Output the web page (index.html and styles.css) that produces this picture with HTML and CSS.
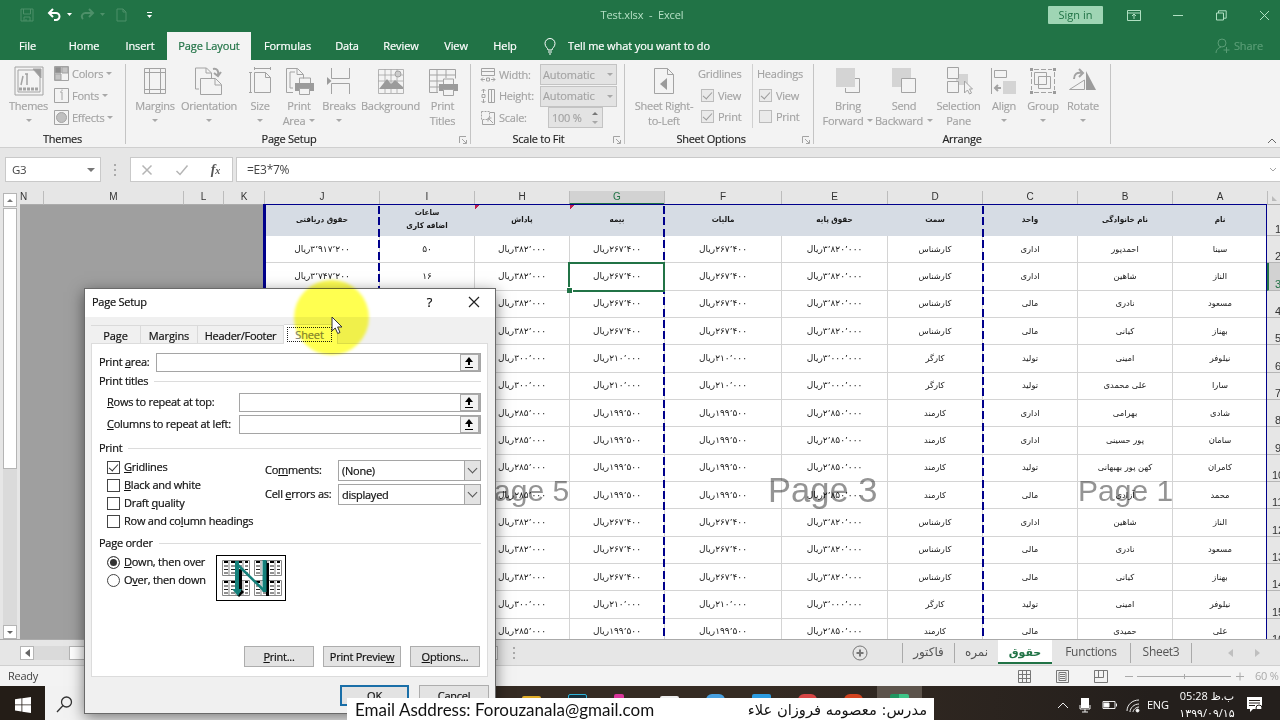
FILE: index.html
```html
<!DOCTYPE html>
<html lang="en">
<head>
	<title>Test.xlsx - Excel</title>
	<meta charset="UTF-8">
	<link rel="stylesheet" href="styles.css">
</head>
<body>
	<div class="titlebar">
		<div class="quick">
			<svg class="dim" width="14" height="14" viewBox="0 0 14 14"><path d="M1 1h12v12H1zM3.500 1v5h7V1M4 13V9h6v4M6 11v2"/></svg>
			<svg class="undo" width="26" height="14" viewBox="0 0 26 14"><path d="M6 1L2 5l4 4M2 5h7a3.500 3.500 0 0 1 0 7H7" stroke-width="2"/><path d="M20 5h5l-2.500 3z" fill="#fff" stroke="none"/></svg>
			<svg class="redo dim" width="26" height="14" viewBox="0 0 26 14"><path d="M9 1l4 4-4 4M13 5H6a3.500 3.500 0 0 0-3 6" stroke-width="2"/><path d="M20 5h5l-2.500 3z" fill="#4d9069" stroke="none"/></svg>
			<svg class="new dim" width="11" height="14" viewBox="0 0 11 14"><path d="M1 1h6l3 3v9H1zM7 1v3h3"/></svg>
			<svg class="more" width="7" height="8" viewBox="0 0 7 8"><path d="M1 1.500h5"/><path d="M1 4h5L3.500 7z" fill="#fff" stroke="none"/></svg>
		</div>
		<div class="doc-name">Test.xlsx &nbsp;-&nbsp; Excel</div>
		<div class="win">
			<span class="signin">Sign in</span>
			<svg width="14" height="11" viewBox="0 0 14 11"><path d="M.5.5h13v10H.5zM.5 3h13M7 9V4.500M5 6l2-2 2 2"/></svg>
			<svg width="10" height="11" viewBox="0 0 10 11"><path d="M0 5.500h10"/></svg>
			<svg width="11" height="11" viewBox="0 0 11 11"><path d="M.5 3h7v7h-7zM2.500 3V.8h7.700v7.400H8"/></svg>
			<svg width="11" height="11" viewBox="0 0 11 11"><path d="M1 1l9 9M10 1l-9 9"/></svg>
		</div>
	</div>

	<div class="tabs">
		<span class="tab file">File</span><span class="tab home">Home</span><span class="tab insert">Insert</span><span class="tab layout on">Page Layout</span><span class="tab formulas">Formulas</span><span class="tab data">Data</span><span class="tab review">Review</span><span class="tab view">View</span><span class="tab help">Help</span>
		<svg class="bulb" width="12" height="17" viewBox="0 0 12 17"><path d="M4 12c0-2-3-3-3-6.500a5 5 0 0 1 10 0C11 9 8 10 8 12zM4 14h4M5 16h2"/></svg>
		<span class="tell">Tell me what you want to do</span>
		<span class="share"><svg width="15" height="16" viewBox="0 0 15 16"><circle cx="7" cy="5" r="4"/><path d="M1 15c0-3 2-5 5-6M11.500 9v6M8.500 12h6"/></svg>Share</span>
	</div>

	<div class="ribbon">
		<div class="group g-themes">
			<div class="tools">
				<div class="tool"><svg width="30" height="30" viewBox="0 0 30 30"><path d="M1 1h28v28H1zM4 4h22v22H4z"/><path d="M19 3h8v9z" fill="#9b9b9b"/><path d="M9 10l-2 9M13 8v11M11 8h3" stroke-width="1.500"/><path d="M5 23h20" stroke-width="3" stroke-dasharray="3 1"/></svg><span>Themes</span><i class="car"></i></div>
				<div class="stack">
					<div><svg width="15" height="15" viewBox="0 0 15 15"><path d="M.5.5h14v14H.5z"/><path d="M1 1h6v6H1z" fill="#8d8d8d"/><path d="M8 1h6v6H8zM1 8h6v6H1z" fill="#c4c4c4"/></svg>Colors<i class="car"></i></div>
					<div><svg width="15" height="15" viewBox="0 0 15 15"><path d="M.5.5h14v14H.5zM8 4v8M6 4h2M8 1.500v1.500"/></svg>Fonts<i class="car"></i></div>
					<div><svg width="15" height="15" viewBox="0 0 15 15"><path d="M.5.5h14v14H.5z"/><circle cx="7.500" cy="7.500" r="5" fill="#c0c0c0"/></svg>Effects<i class="car"></i></div>
				</div>
			</div>
			<div class="caption">Themes</div>
		</div>

		<div class="group g-setup">
			<div class="tools">
				<div class="tool t48"><svg width="24" height="30" viewBox="0 0 24 30"><path d="M1.500 2.500h21v25h-21zM6.500 2.500v25M17.500 2.500v25M1.500 6.500h21M1.500 23.500h21"/></svg><span>Margins</span><i class="car"></i></div>
				<div class="tool t60"><svg width="30" height="30" viewBox="0 0 30 30"><path d="M5 23H1.500v-21h11l5 5v5M12 2v5h5M6.500 12.500h15l6 6v10h-21zM21 13v6h6" /><path d="M19 3c4-1 6 2 5 6M20 7l4 3 3-4" stroke-width="2"/></svg><span>Orientation</span><i class="car"></i></div>
				<div class="tool t42"><svg width="24" height="30" viewBox="0 0 24 30"><path d="M6.500 6.500h11l5 5v15h-16zM17.500 6.500v5h5M6 2.500h17M6.500 1v3M22.500 1v3M2.500 6v21M1 6.500h3M1 26.500h3"/></svg><span>Size</span><i class="car"></i></div>
				<div class="tool t36"><svg width="30" height="30" viewBox="0 0 30 30"><path d="M9 26.500H2.500v-24h11l6 6v4M13 2.500v6h6M9 22H6V6h5"/><path d="M15.500 18v-6h11v6"/><path d="M11 17h19v8H11z" fill="#9b9b9b" stroke="none"/><path d="M15.500 22.500h10v6h-10z" fill="#f3f3f3"/></svg><span>Print<br>Area<i class="car"></i></span></div>
				<div class="tool t44"><svg width="26" height="30" viewBox="0 0 26 30"><path d="M5.500 2v10.500h18V2M5.500 28V17.500h18V28"/><path d="M1 11l4.500 4L1 19z" fill="#9b9b9b" stroke="none"/></svg><span>Breaks</span><i class="car"></i></div>
				<div class="tool t59"><svg width="28" height="30" viewBox="0 0 28 30"><path d="M1.500 3.500h25v24h-25zM1 9h25M1 15h25M8 3v24M14 3v24M20 3v24" stroke-width=".8"/><path d="M2 23l8-10 4 5 4-4 8 7v2z" fill="#9b9b9b" stroke="none"/><circle cx="21" cy="8" r="3" fill="#ccc"/></svg><span>Background</span></div>
				<div class="tool t45"><svg width="30" height="30" viewBox="0 0 30 30"><path d="M10 26.500H1.500v-23h26v9M1 9h26M1 15h14M1 21h10M9 3v23M18 3v9"/><path d="M15.500 18v-5h10v5"/><path d="M11 18h19v7H11z" fill="#9b9b9b" stroke="none"/><path d="M15.500 23.500h10v6h-10z" fill="#f3f3f3"/></svg><span>Print<br>Titles</span></div>
			</div>
			<div class="caption">Page Setup</div>
			<svg class="launch" width="8" height="8" viewBox="0 0 8 8"><path d="M.5 7V.5H7M3 3l4 4M7.500 4v3.500H4"/></svg>
		</div>

		<div class="group g-scale">
			<div class="lines">
				<div><svg width="16" height="16" viewBox="0 0 16 16"><path d="M1.500 1.500h13v7h-13zM1 4.500h13M1 12.500h4M11 12.500h4M3 10.500l-2 2 2 2M13 10.500l2 2-2 2M6.500 11h3v3h-3z"/></svg><label>Width:</label><span class="combo">Automatic<i class="car"></i></span></div>
				<div><svg width="16" height="16" viewBox="0 0 16 16"><path d="M8.500 1.500h6v13h-6zM11.500 1v13M3.500 1v4M3.500 11v4M1.500 3l2-2 2 2M1.500 13l2 2 2-2M2 6.500h3v3H2z"/></svg><label>Height:</label><span class="combo">Automatic<i class="car"></i></span></div>
				<div><svg width="16" height="16" viewBox="0 0 16 16"><path d="M1.500 1.500h8v8h-8z" stroke-dasharray="2 1"/><path d="M10 2.500h4.500v12h-12V10M8 8l5 5M8 11.500V8h3.500"/></svg><label>Scale:</label><span class="spin">100 %<b><i class="car up"></i><i class="car"></i></b></span></div>
			</div>
			<div class="caption">Scale to Fit</div>
			<svg class="launch" width="8" height="8" viewBox="0 0 8 8"><path d="M.5 7V.5H7M3 3l4 4M7.500 4v3.500H4"/></svg>
		</div>

		<div class="group g-options">
			<div class="tools">
				<div class="tool t60"><svg width="22" height="30" viewBox="0 0 22 30"><path d="M1.500 2.500h13l6 6v19h-19zM14.500 2.500v6h6"/><path d="M14 12v12l-7-6z" fill="#9b9b9b" stroke="none"/></svg><span>Sheet Right-<br>to-Left</span></div>
				<div class="opts"><span>Gridlines</span><span><i class="chk ticked"></i>View</span><span><i class="chk ticked"></i>Print</span></div>
				<div class="opts second"><span>Headings</span><span><i class="chk ticked"></i>View</span><span><i class="chk"></i>Print</span></div>
			</div>
			<div class="caption">Sheet Options</div>
			<svg class="launch" width="8" height="8" viewBox="0 0 8 8"><path d="M.5 7V.5H7M3 3l4 4M7.500 4v3.500H4"/></svg>
		</div>

		<div class="group g-arrange">
			<div class="tools">
				<div class="tool t50"><svg width="26" height="30" viewBox="0 0 26 30"><path d="M20 12.500h4.500v14h-14V22"/><path d="M1 2h19v19H1z" fill="#d4d4d4" stroke="none"/></svg><span>Bring<br>Forward<i class="car"></i></span></div>
				<div class="tool t62"><svg width="26" height="30" viewBox="0 0 26 30"><path d="M1 2h19v19H1z" fill="#d4d4d4" stroke="none"/><path d="M10.500 12.500h14v14h-14z" fill="#f3f3f3"/></svg><span>Send<br>Backward<i class="car"></i></span></div>
				<div class="tool t47"><svg width="28" height="30" viewBox="0 0 28 30"><path d="M11 8h12v11H11z" fill="#d4d4d4" stroke="none"/><path d="M2.500 1.500h11v11h-11zM2.500 15.500h11v11h-11z" fill="#f3f3f3"/><path d="M19.500 15v12l3-3 2 4 2-1-2-4h3z" fill="#f3f3f3"/></svg><span>Selection<br>Pane</span></div>
				<div class="tool t44"><svg width="28" height="30" viewBox="0 0 28 30"><path d="M1.500 2v26M4.500 4.500h12v7h-12z"/><path d="M13 15h13v13H13z" fill="#d4d4d4" stroke="none"/><path d="M5 22h6M8 19l-3 3 3 3" stroke-width="2"/></svg><span>Align</span><i class="car"></i></div>
				<div class="tool t34"><svg width="28" height="30" viewBox="0 0 28 30"><path d="M5 3.500h18M5 26.500h18M2.500 6v18M25.500 6v18" stroke-dasharray="5 2"/><path d="M5.500 6.500h12v12h-12zM9.500 10.500h12v12h-12z"/><path d="M1 2h3v3H1zM24 2h3v3h-3zM1 25h3v3H1zM24 25h3v3h-3z" fill="#9b9b9b" stroke="none"/></svg><span>Group</span><i class="car"></i></div>
				<div class="tool t46"><svg width="30" height="30" viewBox="0 0 30 30"><path d="M18 5v19h10z" fill="#9b9b9b" stroke="none"/><path d="M1.500 23.500L16.500 14v9.500z"/><path d="M6 13c0-5 3-7 8-6M11 3l4 4-4 4" stroke-width="2"/></svg><span>Rotate</span><i class="car"></i></div>
			</div>
			<div class="caption">Arrange</div>
		</div>
		<svg class="collapse" width="10" height="6" viewBox="0 0 10 6"><path d="M1 5l4-4 4 4"/></svg>
	</div>

	<div class="formula-bar">
		<div class="name-box">G3<i class="car"></i></div>
		<i class="dots"></i>
		<div class="fx">
			<svg width="12" height="12" viewBox="0 0 12 12"><path d="M1.500 1.500l9 9M10.500 1.500l-9 9"/></svg>
			<svg width="14" height="12" viewBox="0 0 14 12"><path d="M1.500 7l3.500 3.500L12.500 1.500"/></svg>
			<em>f<small>x</small></em>
		</div>
		<div class="formula">=E3*7%<svg width="8" height="6" viewBox="0 0 8 6"><path d="M1 1l3 3 3-3"/></svg></div>
	</div>

	<div class="work">
		<div class="vscroll">
			<span class="arrow"><i class="car up"></i></span>
			<span class="thumb"></span>
			<span class="arrow end"><i class="car"></i></span>
		</div>
		<div class="sheet" dir="rtl">
			<div class="heads" id="heads"></div>
			<div class="rows" id="rows"></div>
			<i class="brk b1"></i><i class="brk b2"></i><i class="brk b3"></i>
			<i class="edge"></i>
			<div class="mark m1" dir="ltr">Page 1</div>
			<div class="mark m3" dir="ltr">Page 3</div>
			<div class="mark m5" dir="ltr">Page 5</div>
		</div>
	</div>

	<div class="sheet-tabs">
		<div class="hscroll"><span class="arrow"><i class="car left"></i></span><span class="hthumb"></span></div>
		<i class="dots"></i>
		<svg class="plus" width="16" height="16" viewBox="0 0 16 16"><circle cx="8" cy="8" r="7"/><path d="M8 4.500v7M4.500 8h7" stroke-width="2"/></svg>
		<span class="stab s1">فاکتور</span><span class="stab s2">نمره</span><span class="stab s3">حقوق</span><span class="stab s4">Functions</span><span class="stab s5">Sheet3</span>
		<i class="car left nav"></i><i class="car right nav"></i>
	</div>

	<div class="status">
		<span class="ready">Ready</span>
		<svg width="13" height="13" viewBox="0 0 13 13"><path d="M.5.5h12v12H.5zM.5 4.500h12M.5 8.500h12M4.500.5v12M8.500.5v12"/></svg>
		<svg width="13" height="13" viewBox="0 0 13 13"><path d="M.5.5h12v12H.5zM3 2.500h7v8H3zM4 4.500h5M4 6.500h5M4 8.500h5"/></svg>
		<svg width="14" height="13" viewBox="0 0 14 13"><path d="M.5.500h13v12H.5zM4.500.5v7M9.500.5v7M0 7.500h9.500"/></svg>
		<svg class="zoomer" width="120" height="13" viewBox="0 0 120 13"><path d="M1 6.500h8M13 6.500h94M60.500 4v5M112 6.500h8M116 2.500v8"/></svg>
		<span class="pct">60 %</span>
	</div>

	<div class="taskbar">
		<span class="start"><svg width="16" height="16" viewBox="0 0 16 16"><path d="M0 2.200l6.500-.9v6.200H0zM7.300 1.200L16 0v7.500H7.300zM0 8.300h6.500v6.200L0 13.600zM7.300 8.300H16V16l-8.700-1.200z"/></svg></span>
		<span class="search"><svg width="17" height="17" viewBox="0 0 17 17"><circle cx="10.500" cy="6" r="5"/><path d="M7 9.500L1 16"/></svg></span>
		<span class="apps">
			<i class="app yellow"></i><i class="app cyan"></i><i class="app pink"></i><i class="app white"></i><i class="app blue"></i><i class="app sky"></i><i class="app red"></i><i class="app orange"></i><i class="app excel"></i>
		</span>
		<svg class="tray" width="84" height="18" viewBox="0 0 84 18">
			<path d="M1 12l5-5 5 5"/>
			<path d="M24 2h8v10h-8z" fill="#fff" stroke="none"/><path d="M23 9v4h10V9M28 13v3M25 16h6"/>
			<path d="M46 5.500h12v7H46zM59.500 7.500v3"/><path d="M47 7h5v4h-5z" fill="#fff"/>
			<path d="M70 15C70 9 75 4 82 4M73 16c0-4 4-8 9-8M76 16c0-2 3-5 6-5" /><circle cx="80.500" cy="14.500" r="1.500" fill="#fff"/>
		</svg>
		<span class="lang">ENG</span>
		<span class="clock"><span dir="rtl">ب.ظ 05:28</span><span dir="ltr"><bdo dir="ltr">۱۳۹۹/۰۹/۱۵</bdo></span></span>
		<svg class="note" width="17" height="17" viewBox="0 0 17 17"><path d="M1 1h15v12H7l-3 3v-3H1z" fill="#fff" stroke="none"/><path d="M3 4.500h11M3 7h11M3 9.500h6" stroke="#241f1c"/><circle cx="13" cy="12" r="3" stroke="#241f1c"/></svg>
	</div>

	<div class="dialog">
		<div class="dlg-title">Page Setup<span class="q">?</span><svg width="12" height="12" viewBox="0 0 12 12"><path d="M1 1l10 10M11 1L1 11"/></svg></div>
		<div class="dlg-tabs"><span class="d1">Page</span><span class="d2">Margins</span><span class="d3">Header/Footer</span><span class="d4"><b>Sheet</b></span></div>
		<div class="panel">
			<div class="field area"><label>Print <u>a</u>rea:</label><span class="ref"><i></i></span></div>
			<div class="legend">Print titles</div>
			<div class="field rowsf"><label><u>R</u>ows to repeat at top:</label><span class="ref"><i></i></span></div>
			<div class="field colsf"><label><u>C</u>olumns to repeat at left:</label><span class="ref"><i></i></span></div>
			<div class="legend print">Print</div>
			<div class="print-opts">
				<div class="checks">
					<span><i class="box ticked"></i><u>G</u>ridlines</span>
					<span><i class="box"></i><u>B</u>lack and white</span>
					<span><i class="box"></i>Draft <u>q</u>uality</span>
					<span><i class="box"></i>Row and co<u>l</u>umn headings</span>
				</div>
				<div class="selects">
					<div><label>Co<u>m</u>ments:</label><span class="sel">(None)<i></i></span></div>
					<div><label>Cell <u>e</u>rrors as:</label><span class="sel">displayed<i></i></span></div>
				</div>
			</div>
			<div class="legend order">Page order</div>
			<div class="order-row">
				<div class="checks">
					<span><i class="radio picked"></i><u>D</u>own, then over</span>
					<span><i class="radio"></i>O<u>v</u>er, then down</span>
				</div>
				<svg class="preview" width="70" height="46" viewBox="0 0 70 46">
					<rect x=".5" y=".5" width="69" height="45" fill="#fff" stroke="#000"/>
					<defs><g id="pg"><path d="M.5.5h27v15H.5zM7 .5v15M14 .5v15M21 .5v15" fill="#fff" stroke="#888"/><path d="M2 2h24" stroke="#000" stroke-width="2" stroke-dasharray="4 3"/><path d="M2 6h24M2 9.500h24M2 13h24" stroke="#222" stroke-dasharray="4 3"/></g></defs>
					<use href="#pg" x="6" y="5"/><use href="#pg" x="38" y="5"/><use href="#pg" x="6" y="25"/><use href="#pg" x="38" y="25"/>
					<path d="M24.500 15v21M51.500 8v33M22 41l5-5" stroke="#000" stroke-width="3"/>
					<path d="M48.500 5v32" stroke="#14807a" stroke-width="4"/>
					<path d="M48.500 36L21 9" stroke="#14807a" stroke-width="2.500"/>
					<path d="M21 6v29" stroke="#14807a" stroke-width="4"/>
					<path d="M16 34h10l-4 7z" fill="#14807a" stroke="none"/>
				</svg>
			</div>
			<div class="btns"><span class="btn p1"><u>P</u>rint...</span><span class="btn p2">Print Previe<u>w</u></span><span class="btn p3"><u>O</u>ptions...</span></div>
		</div>
		<div class="foot"><span class="btn ok">OK</span><span class="btn cancel">Cancel</span></div>
	</div>

	<div class="halo"></div>
	<svg class="pointer" width="12" height="19" viewBox="0 0 12 19"><path d="M1 1v14l3.200-3 2.500 5.500 2.300-1L6.600 11H11z"/></svg>
	<div class="banner"><span class="mail">Email Asddress: Forouzanala@gmail.com</span><span class="teacher" dir="rtl">مدرس: معصومه فروزان علاء</span></div>

	<script src="script.js"></script>
</body>
</html>
```

FILE: styles.css
```css
* {
	box-sizing: border-box;
	margin: 0;
	padding: 0;
}
body {
	width: 1280px;
	height: 720px;
	overflow: hidden;
	position: relative;
	display: flex;
	flex-direction: column;
	background: #e6e6e6;
	font: 11px/14px "Open Sans", "DejaVu Sans", sans-serif;
	letter-spacing: -.25px;
	color: #222;
}
svg {
	display: block;
	flex: none;
	fill: none;
	stroke: #a3a3a3;
}
i { font-style: normal; }

/* small triangles */
.car {
	display: inline-block;
	flex: none;
	border: 3px solid transparent;
	border-top-color: #a8a8a8;
	border-bottom: 0;
}
.car.up {
	border-top: 0;
	border-bottom: 3px solid #777;
}
.car.left {
	border: 4px solid transparent;
	border-right: 5px solid #666;
	border-left: 0;
}
.car.right {
	border: 4px solid transparent;
	border-left: 5px solid #666;
	border-right: 0;
}

/* title bar */
.titlebar {
	height: 30px;
	flex: none;
	display: flex;
	align-items: center;
	justify-content: space-between;
	background: #217346;
}
.titlebar svg { stroke: #b0e0c2; }
.quick {
	display: flex;
	align-items: center;
	width: 500px;
	padding-left: 20px;
}
.titlebar .quick .dim { stroke: #4d9069; }
.titlebar .quick .undo { margin-left: 13px; stroke: #fff; }
.quick .redo { margin-left: 7px; }
.quick .new { margin-left: 10px; }
.titlebar .quick .more { margin-left: 19px; stroke: #fff; }
.doc-name {
	margin-left: 4px;
	color: #b5e0c5;
	letter-spacing: -.1px;
	white-space: nowrap;
}
.win {
	width: 500px;
	display: flex;
	align-items: center;
	justify-content: flex-end;
	padding-right: 10px;
}
.win svg:nth-of-type(1) { margin: 0 32px 0 24px; }
.win svg:nth-of-type(2) { margin-right: 33px; }
.win svg:nth-of-type(3) { margin-right: 32px; }
.signin {
	width: 55px;
	height: 18px;
	line-height: 18px;
	text-align: center;
	background: #9fd5b4;
	color: #217346;
	border-radius: 1px;
	letter-spacing: 0;
}

/* ribbon tabs */
.tabs {
	height: 30px;
	flex: none;
	display: flex;
	padding-top: 2px;
	align-items: center;
	background: #217346;
	color: #fff;
	letter-spacing: -.1px;
	-webkit-text-stroke: .2px;
}
.tab {
	height: 28px;
	line-height: 28px;
	text-align: center;
	white-space: nowrap;
}
.tab.on {
	background: #f3f3f3;
	color: #217346;
}
.file { width: 55px; }
.home { width: 58px; }
.insert { width: 54px; }
.layout { width: 84px; }
.formulas { width: 73px; }
.data { width: 46px; }
.review { width: 62px; }
.view { width: 48px; }
.help { width: 50px; }
.bulb { margin-left: 14px; stroke: #fff; }
.tell { margin-left: 12px; }
.share {
	display: flex;
	align-items: center;
	gap: 4px;
	margin-left: auto;
	padding-right: 17px;
	color: #5a9d76;
}
.share svg { stroke: #5a9d76; }

/* ribbon */
.ribbon {
	height: 88px;
	flex: none;
	display: flex;
	position: relative;
	padding-top: 4px;
	background: #f3f3f3;
	border-bottom: 1px solid #cfcfcf;
	color: #a3a3a3;
	-webkit-text-stroke: .15px;
}
.group {
	height: 80px;
	display: flex;
	flex-direction: column;
	justify-content: space-between;
	position: relative;
	border-right: 1px solid #c4c4c4;
}
.g-themes { width: 126px; }
.g-setup { width: 345px; }
.g-scale { width: 154px; }
.g-options { width: 189px; }
.g-arrange { width: 297px; }
.caption {
	height: 11px;
	line-height: 12px;
	text-align: center;
	color: #222;
}
.g-setup .caption { padding-right: 18px; }
.g-scale .caption { padding-right: 18px; }
.g-options .caption { padding-right: 16px; }
.launch {
	position: absolute;
	right: 3px;
	bottom: 0;
}
.tools {
	display: flex;
	padding-left: 5px;
}
.g-themes .tools { padding-left: 7px; }
.g-arrange .tools { padding-left: 9px; }
.g-options .tools { padding-left: 9px; }
.tool {
	width: 43px;
	display: flex;
	flex-direction: column;
	align-items: center;
	padding-top: 2px;
	text-align: center;
	white-space: nowrap;
	line-height: 15px;
}
.tool > span { margin-top: 2px; }
.tool > .car { margin-top: 6px; }
.tool span .car { margin: 0 0 3px 4px; }
.t34 { width: 34px; }
.t36 { width: 36px; }
.t42 { width: 42px; }
.t44 { width: 44px; }
.t45 { width: 45px; }
.t46 { width: 46px; }
.t47 { width: 47px; }
.t48 { width: 48px; }
.t50 { width: 50px; }
.t59 { width: 59px; }
.t60 { width: 60px; }
.t62 { width: 62px; }
.stack {
	padding: 2px 0 0 4px;
	display: flex;
	flex-direction: column;
	gap: 7px;
}
.stack div {
	height: 15px;
	display: flex;
	align-items: center;
	gap: 3px;
}
.lines div {
	height: 21.500px;
	display: flex;
	align-items: center;
	padding-left: 9px;
}
.lines label { width: 42px; padding-left: 2px; }
.lines svg { margin-right: 1px; }
.combo {
	width: 77px;
	height: 21px;
	display: flex;
	align-items: center;
	justify-content: space-between;
	padding: 0 3px 0 2px;
	margin-left: 1px;
	background: #e3e3e3;
	border: 1px solid #c3c3c3;
	letter-spacing: -.1px;
}
.spin {
	width: 55px;
	height: 21px;
	display: flex;
	align-items: center;
	justify-content: space-between;
	padding: 0 4px 0 3px;
	margin-left: 9px;
	background: #e3e3e3;
	border: 1px solid #c3c3c3;
}
.spin b {
	display: flex;
	flex-direction: column;
	gap: 6px;
}
.opts {
	display: flex;
	flex-direction: column;
	gap: 7.500px;
	width: 51px;
	margin-left: 7px;
	padding-top: 3px;
}
.opts span {
	display: flex;
	gap: 4px;
	align-items: center;
	white-space: nowrap;
}
.opts.second {
	width: 54px;
	margin-left: 0;
	border-left: 1px solid #d0d0d0;
	padding-left: 4px;
}
.opts span:first-child { margin-left: -3px; }
.opts.second span:first-child { margin-left: 0; }
.chk {
	width: 13px;
	height: 13px;
	margin-top: -1px;
	border: 1px solid #bcbcbc;
	background: #eaeaea;
}
.opts.second .chk { margin-left: 2px; }
.ticked::after {
	content: "";
	display: block;
	width: 8px;
	height: 4px;
	margin: 2px 0 0 1px;
	border: solid #9a9a9a;
	border-width: 0 0 1.300px 1.300px;
	transform: rotate(-48deg);
}
.collapse {
	position: absolute;
	right: 3px;
	bottom: 3px;
	stroke: #666;
}

/* formula bar */
.formula-bar {
	flex: none;
	display: flex;
	align-items: center;
	height: 43px;
	padding: 9px 0 9px 5px;
	color: #444;
}
.name-box {
	width: 96px;
	height: 25px;
	display: flex;
	align-items: center;
	justify-content: space-between;
	padding: 0 5px 0 6px;
	background: #fff;
	border: 1px solid #c9c9c9;
	font-size: 11.500px;
}
.name-box .car {
	border-width: 4px 4px 0;
	border-top-color: #777;
}
.dots {
	width: 2px;
	height: 12px;
	background: repeating-linear-gradient(#aaa 0 2px, transparent 2px 5px);
}
.formula-bar .dots { margin: 0 14px 0 13px; }
.fx {
	width: 103px;
	height: 25px;
	display: flex;
	align-items: center;
	justify-content: space-between;
	padding: 0 12px 0 10px;
	background: #fff;
	border: 1px solid #c9c9c9;
}
.fx svg { stroke: #b5b5b5; stroke-width: 1.500; }
.fx em {
	font: italic bold 14px "Liberation Serif", serif;
	color: #555;
}
.fx small { font-size: 10px; }
.formula {
	flex: 1;
	height: 25px;
	display: flex;
	align-items: center;
	justify-content: space-between;
	margin-left: 3px;
	padding: 0 3px 0 10px;
	background: #fff;
	border: 1px solid #c9c9c9;
	border-right: 0;
	font-size: 12px;
}

/* worksheet */
.work {
	flex: none;
	display: flex;
	height: 449px;
	border-bottom: 1px solid #aaa;
}
.vscroll {
	width: 20px;
	display: flex;
	flex-direction: column;
	padding: 2px 3px 0;
}
.arrow {
	width: 14px;
	height: 14px;
	flex: none;
	display: flex;
	align-items: center;
	justify-content: center;
	background: #fff;
	border: 1px solid #b5b5b5;
}
.arrow .car { border-top-color: #666; }
.arrow .car.left { border-top-color: transparent; }
.thumb {
	height: 261px;
	margin-top: 1px;
	background: #fff;
	border: 1px solid #b5b5b5;
}
.vscroll::after {
	content: "";
	order: 1;
	flex: 1;
	background: #dadada;
}
.arrow.end { order: 2; }
.sheet {
	width: 1260px;
	position: relative;
	overflow: hidden;
	background: #9f9f9f;
	font-family: "Liberation Sans", "DejaVu Sans", sans-serif;
	letter-spacing: normal;
}
.heads {
	display: flex;
	height: 14px;
	background: #e6e6e6;
	font-size: 10px;
	line-height: 12px;
	color: #333;
}
.heads span {
	flex: none;
	text-align: center;
	border-left: 1px solid #bcbcbc;
	border-bottom: 1px solid #ababab;
}
.heads .w23 {
	text-align: left;
	border-left: 0;
}
.heads .corner::after {
	content: "";
	display: block;
	margin: 5px 3px 0 0;
	width: 0;
	border-left: 5px solid transparent;
	border-bottom: 5px solid #bbb;
	transform: scaleX(-1);
}
.heads .cur {
	background: #d2d2d2;
	color: #217346;
	border-bottom: 2px solid #217346;
}
.w13 { width: 13px; }
.w23 { width: 23px; }
.w40 { width: 40px; }
.w41 { width: 41px; }
.w95 { width: 95px; }
.w106 { width: 106px; }
.w115 { width: 115px; }
.w117 { width: 117px; }
.w140 { width: 140px; }
.row {
	display: flex;
	width: 1016px;
	height: 27.330px;
	background: #fff;
	font-family: "DejaVu Sans", sans-serif;
	font-size: 9px;
	color: #1a1a1a;
}
.row.first {
	height: 31px;
	background: #d6dce4;
	font-family: "DejaVu Sans Condensed", "DejaVu Sans", sans-serif;
	font-weight: bold;
}
.cell {
	flex: none;
	display: flex;
	align-items: center;
	justify-content: center;
	text-align: center;
	line-height: 13px;
	border-left: 1px solid #d4d4d4;
	border-bottom: 1px solid #d4d4d4;
	white-space: pre;
}
.cell.name { font-size: 8.400px; }
.first .cell, .first .cell.name {
	padding-bottom: 2px;
	border-color: #d6dce4;
	font-size: 8px;
}
.num {
	width: 13px;
	flex: none;
	display: flex;
	align-items: flex-end;
	justify-content: flex-end;
	direction: ltr;
	overflow: hidden;
	background: #e6e6e6;
	border-bottom: 1px solid #b5b5b5;
	font: 11px/11px "Liberation Sans", sans-serif;
	color: #333;
}
.num b {
	width: 5px;
	font-weight: normal;
}
.num.long b { width: 8px; }
.num.cur {
	background: #d2d2d2;
	color: #217346;
	border-left: 2px solid #217346;
}
.cell.selected {
	position: relative;
	outline: 2px solid #217346;
	outline-offset: -1px;
	z-index: 3;
}
.cell.selected::after {
	content: "";
	position: absolute;
	left: -3px;
	bottom: -3px;
	width: 5px;
	height: 5px;
	background: #217346;
	border: solid #fff;
	border-width: 1px 1px 0 0;
}
.cell.note { background: linear-gradient(135deg, #c02050 3px, transparent 3px); }
/* page breaks and print area edge lie over the cells */
.brk {
	position: absolute;
	top: 15px;
	bottom: 0;
	width: 2px;
	background: repeating-linear-gradient(#00008b 0 8px, transparent 8px 11.400px);
}
.b1 { left: 962px; }
.b2 { left: 643px; z-index: 2; }
.b3 { left: 358px; }
.edge {
	position: absolute;
	left: 243px;
	top: 13px;
	right: 13px;
	bottom: 0;
	border: solid #00008b;
	border-width: 1.500px 1px 0 3px;
}
.mark {
	position: absolute;
	color: #949494;
	mix-blend-mode: multiply;
	white-space: nowrap;
	line-height: 40px;
}
.m1 { left: 1058px; top: 280px; font-size: 30px; }
.m3 { left: 748px; top: 279px; font-size: 34.500px; }
.m5 { left: 454px; top: 280px; font-size: 30px; }

/* sheet tabs */
.sheet-tabs {
	flex: none;
	height: 26px;
	display: flex;
	align-items: center;
	padding-left: 20px;
	border-bottom: 1px solid #cfcfcf;
	color: #555;
	font-size: 12px;
	letter-spacing: normal;
}
.hscroll {
	width: 478px;
	height: 14px;
	display: flex;
	background: #dadada;
}
.hthumb {
	flex: 1;
	margin-left: 35px;
	background: #fff;
	border: 1px solid #b5b5b5;
}
.sheet-tabs .dots { margin-left: 15px; }
.plus { margin-left: 337px; stroke: #777; }
.stab {
	height: 20px;
	line-height: 18px;
	text-align: center;
	border-right: 1px solid #aaa;
}
.s1 { width: 53px; margin-left: 34px; border-left: 1px solid #aaa; }
.s2 { width: 43px; border: 0; }
.stab.s3 {
	width: 54px;
	height: 24px;
	line-height: 23px;
	align-self: flex-start;
	background: #fff;
	border: 0;
	border-bottom: 2px solid #217346;
	color: #217346;
	font-size: 11px;
	font-weight: bold;
}
.s4, .s5 { letter-spacing: -.3px; }
.s4 { width: 79px; }
.s5 { width: 61px; }
.sheet-tabs .nav { opacity: .3; margin-left: 36px; }
.sheet-tabs .nav + .nav { margin-left: 22px; }

/* status bar */
.status {
	flex: none;
	height: 20px;
	display: flex;
	align-items: center;
	padding-left: 8px;
	background: #f3f3f3;
	color: #444;
}
.status svg { stroke: #777; margin-right: 25px; }
.ready { width: 1010px; flex: none; }
.status svg.zoomer { stroke: #aaa; margin: 0 11px 0 -9px; }
.pct { color: #aaa; white-space: nowrap; }

/* windows taskbar */
.taskbar {
	flex: none;
	height: 34px;
	display: flex;
	background: linear-gradient(90deg, #352b23 60%, #241f1c 90%);
	color: #fff;
}
.start {
	width: 45px;
	padding: 11px 0 0 15px;
	background: #241d17;
}
.start svg { fill: #fff; stroke: none; }
.search {
	width: 345px;
	padding: 10px 0 0 11px;
	background: #f2f2f2;
}
.search svg { stroke: #333; stroke-width: 1.300; }
.apps {
	width: 532px;
	display: flex;
	justify-content: flex-end;
}
.app {
	width: 45px;
	height: 34px;
	margin-right: 1px;
	padding: 8px 13px 0;
}
.app::after {
	content: "";
	display: block;
	height: 12px;
	border-radius: 2px;
	background: #e0ac28;
}
.yellow::after { margin-top: 2px; }
.cyan::after { background: #16303c; border: 1px solid #2fb3d8; }
.pink::after { background: #d8359a; width: 10px; }
.white::after { margin-top: 2px; background: #eee; }
.blue::after { background: #48a0e0; border-radius: 10px; }
.sky::after { background: #2b9be0; }
.red::after { background: #d64545; border-radius: 10px; }
.orange::after { background: #d3431f; border-radius: 10px; }
.excel { background: #5c534b; margin-right: 0; }
.excel::after { background: linear-gradient(90deg, #1f9560 50%, #3ec487 50%); }
.tray { stroke: #eee; margin: 10px 0 0 135px; }
.lang { margin: 12px 0 0 6px; width: 25px; }
.clock {
	width: 54px;
	display: flex;
	flex-direction: column;
	align-items: center;
	margin: 1px 0 0 8px;
	line-height: 17px;
	letter-spacing: normal;
	white-space: nowrap;
}
.taskbar .note { margin: 10px 0 0 12px; stroke: none; }

/* page setup dialog */
.dialog {
	position: absolute;
	left: 84px;
	top: 288px;
	width: 412px;
	height: 426px;
	background: #f0f0f0;
	border: 1px solid #6a6a6a;
	box-shadow: 0 4px 14px rgba(0, 0, 0, .5);
	color: #111;
	-webkit-text-stroke: .2px;
}
.dlg-title {
	height: 28px;
	display: flex;
	align-items: center;
	padding: 0 15px 2px 7px;
	background: #fff;
}
.dlg-title .q { margin: 0 36px 0 auto; font-size: 13px; }
.dlg-title svg { stroke: #222; stroke-width: 1.200; }
.dlg-tabs {
	height: 26px;
	display: flex;
	align-items: flex-end;
	padding-left: 6px;
	letter-spacing: -.1px;
}
.dlg-tabs span {
	height: 18px;
	line-height: 19px;
	text-align: center;
	border-top: 1px solid #dadada;
	border-right: 1px solid #dadada;
}
.d1 { width: 50px; }
.d2 { width: 57px; }
.d3 { width: 86px; letter-spacing: -.3px; }
.dlg-tabs .d4 {
	width: 54px;
	height: 20px;
	padding: 2px 5px 0 3px;
	margin-bottom: -1px;
	position: relative;
	background: #fff;
}
.d4 b {
	display: block;
	height: 15px;
	line-height: 14px;
	font-weight: normal;
	border: 1px dotted #222;
	color: #808080;
}
.panel {
	height: 334px;
	margin: 0 7px 0 6px;
	padding: 8px 6px 0 7px;
	background: #fff;
	border: 1px solid #dcdcdc;
}
.field {
	height: 20px;
	display: flex;
	align-items: center;
}
.field label { flex: none; }
.area label { width: 57px; }
.rowsf, .colsf { padding-left: 8px; }
.rowsf label, .colsf label { width: 132px; }
.colsf { margin-top: 2px; }
.ref {
	flex: 1;
	height: 19px;
	display: flex;
	justify-content: flex-end;
	border: 1px solid #a5a5a5;
}
.ref i {
	width: 20px;
	border: 1px solid #aaa;
	border-width: 1px 2px 1px 1px;
	position: relative;
	background: #f3f3f3;
}
.ref i::before {
	content: "";
	position: absolute;
	left: 4px;
	top: 2px;
	border: 4px solid transparent;
	border-top: 0;
	border-bottom: 5px solid #000;
}
.ref i::after {
	content: "";
	position: absolute;
	left: 4px;
	top: 7px;
	width: 8px;
	height: 5px;
	border-bottom: 1px solid #000;
	background: linear-gradient(#000, #000) 3px 0 / 2px 3px no-repeat;
}
.legend {
	height: 14px;
	display: flex;
	align-items: center;
	gap: 6px;
	margin: 2px 0 4px;
}
.legend::after {
	content: "";
	flex: 1;
	border-top: 1px solid #dcdcdc;
}
.legend.print { margin: 7px 0 3px; }
.print-opts { display: flex; justify-content: space-between; }
.checks {
	display: flex;
	flex-direction: column;
	padding-left: 8px;
}
.checks span {
	height: 18px;
	display: flex;
	align-items: center;
	white-space: pre;
}
.box, .radio {
	width: 13px;
	height: 13px;
	margin-right: 4px;
	border: 1px solid #444;
	background: #fff;
}
.box.ticked::after { border-color: #333; }
.radio { border-radius: 50%; }
.radio.picked {
	background: #333;
	border: 1px solid #444;
	box-shadow: inset 0 0 0 2px #fff;
}
.selects div {
	height: 24px;
	display: flex;
	align-items: center;
}
.selects label { width: 73px; }
.sel {
	width: 143px;
	height: 21px;
	display: flex;
	justify-content: space-between;
	align-items: stretch;
	padding-left: 3px;
	line-height: 19px;
	border: 1px solid #a5a5a5;
}
.sel i {
	width: 16px;
	background: #e3e3e3;
	border-left: 1px solid #a5a5a5;
}
.sel i::after {
	content: "";
	display: block;
	width: 6px;
	height: 6px;
	margin: 4px 0 0 4px;
	border: solid #555;
	border-width: 0 1px 1px 0;
	transform: rotate(45deg);
}
.legend.order { margin: 6px 0 3px; }
.order-row { display: flex; height: 93px; }
.order-row .checks { width: 117px; }
.preview { margin-top: 2px; }
.btns { display: flex; padding-left: 145px; }
.btn {
	height: 21px;
	line-height: 19px;
	text-align: center;
	white-space: nowrap;
	background: #e3e3e3;
	border: 1px solid #adadad;
}
.p1 { width: 70px; }
.p2 { width: 78px; margin: 0 9px; }
.p3 { width: 70px; }
.foot { display: flex; padding: 8px 0 0 255px; }
.ok { width: 69px; border: 2px solid #1a6fa8; line-height: 17px; }
.cancel { width: 70px; margin-left: 10px; }

/* pointer highlight */
.halo {
	position: absolute;
	left: 294px;
	top: 280px;
	width: 75px;
	height: 75px;
	border-radius: 50%;
	background: #ffff50;
	mix-blend-mode: multiply;
	filter: blur(1.500px);
}
.pointer {
	position: absolute;
	left: 331px;
	top: 316px;
	fill: #fff;
	stroke: #333;
}
.banner {
	position: absolute;
	left: 347px;
	top: 698px;
	width: 587px;
	height: 22px;
	display: flex;
	justify-content: space-between;
	padding: 0 7px 0 8px;
	background: #fff;
	color: #111;
	line-height: 24px;
	letter-spacing: normal;
	white-space: nowrap;
	overflow: hidden;
}
.mail { font-family: Lato, sans-serif; font-size: 17px; }
.teacher { font-family: "DejaVu Sans", sans-serif; font-size: 14.700px; }
```

FILE: script.js
```js
var heads = document.getElementById('heads');
var rows = document.getElementById('rows');

// column letters and their widths, the sheet runs right to left
var cols = [['', 13], ['A', 95], ['B', 95], ['C', 95], ['D', 95], ['E', 106], ['F', 117], ['G', 95], ['H', 95], ['I', 95], ['J', 115], ['K', 41], ['L', 40], ['M', 140], ['N', 23]];

var titles = ['نام', 'نام خانوادگی', 'واحد', 'سمت', 'حقوق پایه', 'مالیات', 'بیمه', 'پاداش', 'ساعات\nاضافه کاری', 'حقوق دریافتی'];

// base salary, tax and insurance, bonus for each post
var pay = {
	'کارشناس': ['۳٬۸۲۰٬۰۰۰', '۲۶۷٬۴۰۰', '۳۸۲٬۰۰۰'],
	'کارگر': ['۳٬۰۰۰٬۰۰۰', '۲۱۰٬۰۰۰', '۳۰۰٬۰۰۰'],
	'کارمند': ['۲٬۸۵۰٬۰۰۰', '۱۹۹٬۵۰۰', '۲۸۵٬۰۰۰']
};

var people = [
	['سینا', 'احمدپور', 'اداری', 'کارشناس', '۵۰', '۳٬۹۱۷٬۲۰۰ریال'],
	['الناز', 'شاهین', 'اداری', 'کارشناس', '۱۶', '۳٬۷۴۷٬۲۰۰ریال'],
	['مسعود', 'نادری', 'مالی', 'کارشناس'],
	['بهناز', 'کیانی', 'مالی', 'کارشناس'],
	['نیلوفر', 'امینی', 'تولید', 'کارگر'],
	['سارا', 'علی محمدی', 'تولید', 'کارگر'],
	['شادی', 'بهرامی', 'اداری', 'کارمند'],
	['سامان', 'پور حسینی', 'اداری', 'کارمند'],
	['کامران', 'کهن پور بهبهانی', 'تولید', 'کارمند'],
	['محمد', 'آزادی', 'مالی', 'کارمند'],
	['الناز', 'شاهین', 'اداری', 'کارشناس'],
	['مسعود', 'نادری', 'مالی', 'کارشناس'],
	['بهناز', 'کیانی', 'مالی', 'کارشناس'],
	['نیلوفر', 'امینی', 'تولید', 'کارگر'],
	['علی', 'حمیدی', 'مالی', 'کارمند']
];

function add(parent, tag, cls, text) {
	var el = document.createElement(tag);
	el.className = cls;
	if (text) el.textContent = text;
	parent.appendChild(el);
	return el;
}

function addRow(n, cells) {
	var row = add(rows, 'div', n == 1 ? 'row first' : 'row');
	var num = add(row, 'div', 'num' + (n > 9 ? ' long' : '') + (n == 3 ? ' cur' : ''));
	add(num, 'b', '', String(n));
	for (var i = 0; i < 10; i++) {
		var cls = 'cell w' + cols[i + 1][1];
		if (i < 4) cls += ' name';
		if (n == 3 && i == 6) cls += ' selected';
		if (n == 1 && (i == 6 || i == 7)) cls += ' note';
		add(row, 'div', cls, cells[i]);
	}
}

for (var c = 0; c < cols.length; c++) {
	add(heads, 'span', 'w' + cols[c][1] + (c == 0 ? ' corner' : '') + (cols[c][0] == 'G' ? ' cur' : ''), cols[c][0]);
}

addRow(1, titles);
for (var r = 0; r < people.length; r++) {
	var p = people[r];
	var s = pay[p[3]];
	addRow(r + 2, [p[0], p[1], p[2], p[3], s[0] + 'ریال', s[1] + 'ریال', s[1] + 'ریال', s[2] + 'ریال', p[4], p[5]]);
}
```
